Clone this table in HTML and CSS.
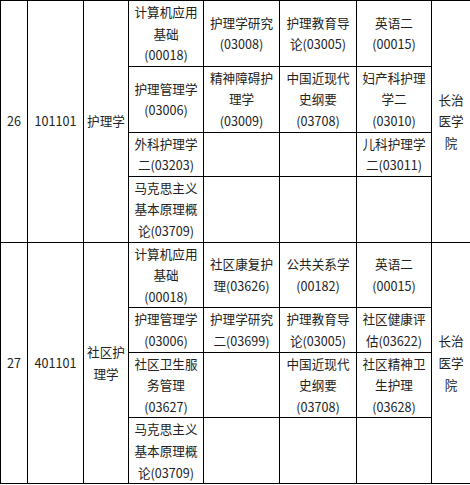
FILE: index.html
```html
<!DOCTYPE html>
<html lang="zh-CN">
<head>
<meta charset="utf-8">
<title>专业课程表</title>
<link rel="stylesheet" href="styles.css">
</head>
<body>
<table class="plan">
<colgroup>
<col class="c-no"><col class="c-code"><col class="c-major"><col class="c-sub"><col class="c-sub2"><col class="c-sub3"><col class="c-sub"><col class="c-school">
</colgroup>
<tbody>
<tr class="r3">
<td rowspan="4">26</td>
<td rowspan="4">101101</td>
<td rowspan="4">护理学</td>
<td>计算机应用<br>基础<br>(00018)</td>
<td>护理学研究<br>(03008)</td>
<td>护理教育导<br>论(03005)</td>
<td>英语二<br>(00015)</td>
<td rowspan="4">长治<br>医学<br>院</td>
</tr>
<tr class="r3">
<td>护理管理学<br>(03006)</td>
<td>精神障碍护<br>理学<br>(03009)</td>
<td>中国近现代<br>史纲要<br>(03708)</td>
<td>妇产科护理<br>学二<br>(03010)</td>
</tr>
<tr class="r2">
<td>外科护理学<br>二(03203)</td>
<td></td>
<td></td>
<td>儿科护理学<br>二(03011)</td>
</tr>
<tr class="r3">
<td>马克思主义<br>基本原理概<br>论(03709)</td>
<td></td>
<td></td>
<td></td>
</tr>
<tr class="r3">
<td rowspan="4">27</td>
<td rowspan="4">401101</td>
<td rowspan="4">社区护<br>理学</td>
<td>计算机应用<br>基础<br>(00018)</td>
<td>社区康复护<br>理(03626)</td>
<td>公共关系学<br>(00182)</td>
<td>英语二<br>(00015)</td>
<td rowspan="4">长治<br>医学<br>院</td>
</tr>
<tr class="r2">
<td>护理管理学<br>(03006)</td>
<td>护理学研究<br>二(03699)</td>
<td>护理教育导<br>论(03005)</td>
<td>社区健康评<br>估(03622)</td>
</tr>
<tr class="r3">
<td>社区卫生服<br>务管理<br>(03627)</td>
<td></td>
<td>中国近现代<br>史纲要<br>(03708)</td>
<td>社区精神卫<br>生护理<br>(03628)</td>
</tr>
<tr class="r3">
<td>马克思主义<br>基本原理概<br>论(03709)</td>
<td></td>
<td></td>
<td></td>
</tr>
</tbody>
</table>
</body>
</html>
```

FILE: styles.css
```css
html, body {
  margin: 0;
  padding: 0;
  background: #ffffff;
}

.plan {
  border-collapse: collapse;
  table-layout: fixed;
  width: 470px;
  font-family: "Noto Sans CJK SC", "Noto Sans", sans-serif;
  font-size: 12.6px;
  line-height: 21.6px;
  color: #222222;
}

.plan td {
  border: 1px solid #000000;
  padding: 0;
  text-align: center;
  vertical-align: middle;
  white-space: nowrap;
  overflow: hidden;
}

.c-no { width: 27px; }
.c-code { width: 56px; }
.c-major { width: 45px; }
.c-sub { width: 75px; }
.c-sub2 { width: 76px; }
.c-sub3 { width: 77px; }
.c-school { width: 39px; }

.r3 td { height: 64.8px; }
.r2 td { height: 43.2px; }
```
